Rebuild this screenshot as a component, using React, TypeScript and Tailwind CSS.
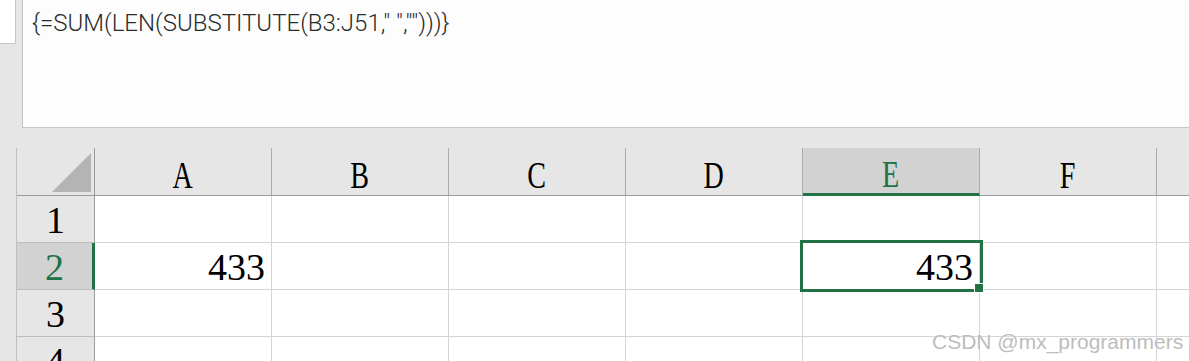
import React from "react";

const columns = ["A", "B", "C", "D", "E", "F", ""];
const rows = [1, 2, 3, 4];

const values: Record<string, string> = {
  A2: "433",
  E2: "433",
};

const active = { col: "E", row: 2 };

const serif = "font-['Liberation_Serif','Times_New_Roman',serif]";

const CornerCell: React.FC = () => (
  <div className="relative bg-[#e6e6e6] border-r border-b border-[#9b9b9b]">
    <svg width="77" height="47" className="absolute left-0 top-0">
      <polygon points="35,44 74,5 74,44" fill="#b4b4b4" />
    </svg>
  </div>
);

const ColumnHeader: React.FC<{ label: string; selected: boolean }> = ({
  label,
  selected,
}) => (
  <div
    className={`flex items-center justify-center pt-[7px] border-r border-[#ababab] ${
      selected
        ? "bg-[#d2d2d2] border-b-[3px] border-b-[#217346] text-[#217346]"
        : "bg-[#e6e6e6] border-b border-b-[#9b9b9b] text-black"
    }`}>
    <span className={`${serif} text-[38px] leading-none inline-block scale-x-[0.74]`}>
      {label}
    </span>
  </div>
);

const RowHeader: React.FC<{ n: number; selected: boolean }> = ({
  n,
  selected,
}) => (
  <div
    className={`flex items-center justify-center pt-[2px] border-b border-[#bdbdbd] ${
      selected
        ? "bg-[#d2d2d2] border-r-[3px] border-r-[#217346] text-[#217346]"
        : "bg-[#e6e6e6] border-r border-r-[#9b9b9b] text-black"
    }`}>
    <span className={`${serif} text-[38px] leading-none`}>{n}</span>
  </div>
);

const Cell: React.FC<{ value?: string; selected: boolean }> = ({
  value,
  selected,
}) => (
  <div className="relative bg-white flex items-center justify-end pr-[6px] pt-[2px] border-r border-b border-[#d4d4d4]">
    {value && (
      <span className={`${serif} text-[38px] leading-none text-black`}>
        {value}
      </span>
    )}
    {selected && (
      <>
        <div className="absolute -left-[3px] -top-[3px] w-[183px] h-[52px] border-[3px] border-[#217346] z-10 pointer-events-none" />
        <div className="absolute left-[171px] top-[40px] w-[10px] h-[10px] bg-[#217346] border border-white z-20" />
      </>
    )}
  </div>
);

export default function App() {
  return (
    <div className="relative w-[1189px] h-[361px] overflow-hidden bg-[#e6e6e6] font-['Liberation_Sans',Arial,sans-serif]">
      {/* formula bar */}
      <div className="flex h-[148px] items-start">
        <div className="w-[16px] h-[44px] bg-white border-r border-b border-[#c6c6c6]" />
        <div className="ml-[6px] flex-1 h-[128px] bg-[#fdfdfd] border-l border-b border-[#c6c6c6] pl-[9px] pt-[9px]">
          <span className="font-['Roboto','Liberation_Sans',sans-serif] font-light text-[24px] leading-[28px] text-[#2b2b2b]">
            {'{=SUM(LEN(SUBSTITUTE(B3:J51," ","")))}'}
          </span>
        </div>
      </div>

      {/* sheet */}
      <div className="ml-[16px] border-l border-[#c0c0c0] grid grid-cols-[78px_repeat(7,177px)] grid-rows-[48px_repeat(4,47px)]">
        <CornerCell />
        {columns.map((c, i) => (
          <ColumnHeader key={i} label={c} selected={c === active.col} />
        ))}
        {rows.map((r) => (
          <React.Fragment key={r}>
            <RowHeader n={r} selected={r === active.row} />
            {columns.map((c, i) => (
              <Cell
                key={i}
                value={c ? values[`${c}${r}`] : undefined}
                selected={c === active.col && r === active.row}
              />
            ))}
          </React.Fragment>
        ))}
      </div>

      {/* watermark */}
      <div className="absolute left-[932px] top-[329px] text-[21px] leading-[26px] text-[#bdbdbd] [text-shadow:0_0_2px_#fff] z-30 whitespace-nowrap">
        CSDN @mx_programmers
      </div>
    </div>
  );
}
